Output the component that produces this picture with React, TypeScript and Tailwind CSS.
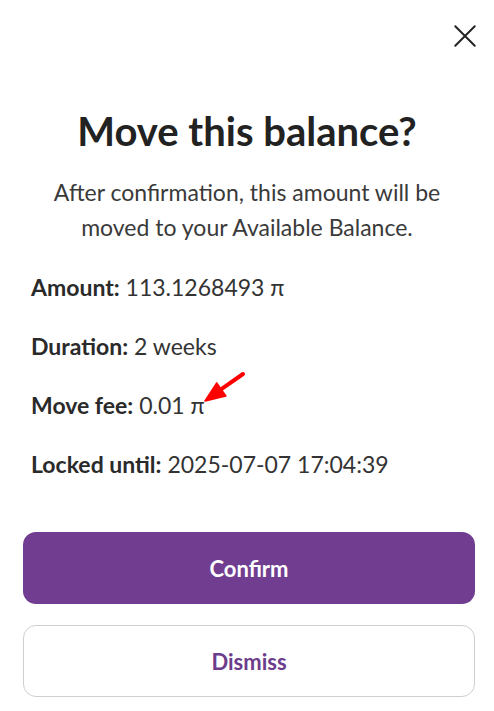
import React from "react";

const rows: { label: string; value: string }[] = [
  { label: "Amount:", value: "113.1268493 π" },
  { label: "Duration:", value: "2 weeks" },
  { label: "Move fee:", value: "0.01 π" },
  { label: "Locked until:", value: "2025-07-07 17:04:39" },
];

export default function App() {
  return (
    <div
      className="relative h-[711px] w-[494px] bg-white text-[#333]"
      style={{ fontFamily: "Lato, 'Noto Sans', sans-serif" }}
    >
      <div className="flex justify-end pr-[16px] pt-[23px]">
        <button type="button" aria-label="Close" className="text-[#222]">
          <svg width="26" height="26" viewBox="0 0 24 24" fill="none" stroke="currentColor" strokeWidth="1.8" strokeLinecap="round">
            <path d="M3 3L21 21M21 3L3 21" />
          </svg>
        </button>
      </div>

      <h1 className="mt-[62px] text-center text-[40px] font-bold leading-none text-[#222]">
        Move this balance?
      </h1>
      <p className="mx-auto mt-[24px] w-[440px] text-center text-[23px] leading-[35px] text-[#3a3a3a]">
        After confirmation, this amount will be moved to your Available Balance.
      </p>

      <div className="mt-[30px] flex flex-col gap-[35px] px-[31px] text-[23px] leading-[24px]">
        {rows.map((r) => (
          <div key={r.label} className="relative">
            <span className="font-bold text-[#2a2a2a]">{r.label}</span> {r.value}
            {r.label === "Move fee:" && (
              <svg
                className="absolute left-[170px] top-[-22px]"
                width="46"
                height="34"
                viewBox="0 0 46 34"
              >
                <path d="M20 18.4 L42 3" stroke="#f00" strokeWidth="4" strokeLinecap="round" />
                <path d="M4 30 L15.7 11.9 L24.9 24.9 Z" fill="#f00" stroke="#f00" strokeWidth="1.5" strokeLinejoin="round" />
              </svg>
            )}
          </div>
        ))}
      </div>

      <div className="mt-[56px] flex flex-col gap-[21px] pl-[23px] pr-[19px]">
        <button
          type="button"
          className="h-[72px] w-full rounded-[13px] bg-[#713d90] text-[22px] font-bold text-white"
        >
          Confirm
        </button>
        <button
          type="button"
          className="h-[72px] w-full rounded-[13px] border border-[#cfcfcf] bg-white text-[22px] font-bold text-[#6b3d8c]"
        >
          Dismiss
        </button>
      </div>
    </div>
  );
}
